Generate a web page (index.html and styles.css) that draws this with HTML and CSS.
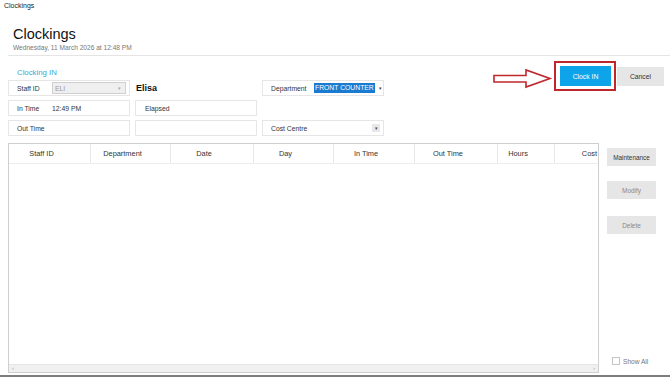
FILE: index.html
```html
<!DOCTYPE html>
<html lang="en">
<head>
    <meta charset="UTF-8">
    <meta name="viewport" content="width=device-width, initial-scale=1.0">
    <title>Clockings</title>
    <link rel="stylesheet" href="styles.css">
</head>
<body>
    <div class="window">
        <div class="titlebar">Clockings</div>

        <div class="header">
            <h1>Clockings</h1>
            <div class="date">Wednesday, 11 March 2026 at 12:48 PM</div>
        </div>

        <div class="top">
            <div class="form">
                <div class="section-title">Clocking IN</div>
                <div class="fields">
                    <div class="field">
                        <span class="label">Staff ID</span>
                        <div class="select disabled"><span>ELI</span><span class="caret">&#9662;</span></div>
                    </div>
                    <div class="staff-name">Elisa</div>
                    <div class="field">
                        <span class="label wide">Department</span>
                        <span class="highlight">FRONT COUNTER</span>
                        <span class="drop">&#9662;</span>
                    </div>

                    <div class="field">
                        <span class="label">In Time</span>
                        <span class="value">12:49 PM</span>
                    </div>
                    <div class="field pad">
                        <span class="label">Elapsed</span>
                    </div>
                    <div></div>

                    <div class="field">
                        <span class="label">Out Time</span>
                    </div>
                    <div class="field"></div>
                    <div class="field">
                        <span class="label">Cost Centre</span>
                        <span class="drop grey">&#9662;</span>
                    </div>
                </div>
            </div>

            <div class="actions">
                <svg class="pointer" width="62" height="22" viewBox="0 0 62 22">
                    <path d="M2 7.5 H34 V2 L58 10.5 L34 19 V14 H2 Z" fill="#fff" stroke="#c0272d" stroke-width="1.6" stroke-linejoin="miter"/>
                </svg>
                <div class="highlight-box">
                    <button class="btn primary">Clock IN</button>
                </div>
                <button class="btn cancel">Cancel</button>
            </div>
        </div>

        <div class="main">
            <div class="grid">
                <div class="grid-head">
                    <div class="col c1">Staff ID</div>
                    <div class="col c2">Department</div>
                    <div class="col c3">Date</div>
                    <div class="col c4">Day</div>
                    <div class="col c5">In Time</div>
                    <div class="col c6">Out Time</div>
                    <div class="col c7">Hours</div>
                    <div class="col c8">Cost</div>
                </div>
                <div class="grid-body"></div>
                <div class="hscroll">
                    <span>&#8249;</span>
                    <span>&#8250;</span>
                </div>
            </div>

            <div class="side">
                <button class="btn side-btn">Maintenance</button>
                <button class="btn side-btn off">Modify</button>
                <button class="btn side-btn off">Delete</button>
                <label class="show-all"><span class="check"></span>Show All</label>
            </div>
        </div>
    </div>
</body>
</html>
```

FILE: styles.css
```css
body {
    margin: 0;
    font-family: "Liberation Sans", Arial, sans-serif;
    background-color: #ffffff;
    color: #222;
}

.window {
    width: 670px;
    height: 377px;
    box-sizing: border-box;
    border-bottom: 2px solid #7d7d7d;
    overflow: hidden;
}

.titlebar {
    height: 14px;
    padding-left: 4px;
    font-size: 7px;
    line-height: 12px;
    color: #222;
}

.header {
    margin: 12px 0 0 8px;
    padding: 0 0 3px 5px;
    border-bottom: 1px solid #e4e4e4;
}

h1 {
    margin: 0;
    font-size: 14.5px;
    line-height: 17px;
    font-weight: normal;
    color: #111;
}

.date {
    font-size: 6.6px;
    line-height: 9px;
    color: #777;
}

/* top section: form and clock buttons */

.top {
    display: flex;
    justify-content: space-between;
}

.form {
    padding: 12px 0 0 8px;
}

.section-title {
    padding-left: 9px;
    font-size: 7.8px;
    line-height: 10px;
    color: #3aa6d4;
    margin-bottom: 2px;
}

.fields {
    display: grid;
    grid-template-columns: 122px 122px 122px;
    grid-auto-rows: 16px;
    gap: 4px 5px;
}

.field {
    display: flex;
    align-items: center;
    border: 1px solid #e6e6e6;
    box-sizing: border-box;
    padding-left: 8px;
    font-size: 6.8px;
    color: #333;
    white-space: nowrap;
}

.field.pad {
    padding-left: 9px;
}

.label {
    width: 35px;
    flex-shrink: 0;
}

.label.wide {
    width: 43px;
}

.value {
    color: #333;
}

.select {
    display: flex;
    justify-content: space-between;
    align-items: center;
    width: 74px;
    height: 12px;
    box-sizing: border-box;
    padding: 0 4px 0 2px;
    border: 1px solid #cfcfcf;
    background-color: #efefef;
    color: #999;
}

.caret {
    font-size: 5px;
    color: #aaa;
}

.staff-name {
    display: flex;
    align-items: center;
    padding-left: 1px;
    font-size: 9px;
    font-weight: bold;
    color: #111;
}

.highlight {
    background-color: #1a7bd0;
    color: #fff;
    padding: 1px 1px;
    line-height: 8px;
}

.drop {
    margin-left: 4px;
    width: 8px;
    height: 8px;
    font-size: 5px;
    line-height: 8px;
    text-align: center;
    color: #444;
}

.drop.grey {
    margin-left: auto;
    margin-right: 3px;
    background-color: #e8e8e8;
}

.actions {
    display: flex;
    align-items: flex-start;
    padding: 5px 6px 0 0;
}

.pointer {
    margin: 7px 0 0 0;
}

.highlight-box {
    border: 2px solid #c0272d;
    padding: 3px 3px 3px 4px;
}

.btn {
    font-family: "Liberation Sans", Arial, sans-serif;
    border: none;
    padding: 0;
    cursor: pointer;
}

.primary {
    display: block;
    width: 51px;
    height: 20px;
    background-color: #0ea4ea;
    color: #fff;
    font-size: 6.8px;
}

.cancel {
    margin: 6px 0 0 1px;
    width: 47px;
    height: 19px;
    background-color: #e6e6e6;
    color: #333;
    font-size: 6.8px;
}

/* lower section: grid and side buttons */

.main {
    display: flex;
    margin-top: 7px;
    padding-left: 8px;
}

.grid {
    display: flex;
    flex-direction: column;
    width: 591px;
    height: 230px;
    box-sizing: border-box;
    border: 1px solid #cfcfcf;
}

.grid-head {
    display: flex;
    height: 20px;
    border-bottom: 1px solid #ececec;
    box-sizing: border-box;
}

.col {
    display: flex;
    align-items: center;
    justify-content: center;
    box-sizing: border-box;
    padding-right: 16px;
    border-right: 1px solid #e8e8e8;
    font-size: 7.4px;
    color: #333;
}

.c1 { width: 82px; }
.c2 { width: 80px; }
.c3 { width: 83px; }
.c4 { width: 80px; }
.c5 { width: 81px; }
.c6 { width: 83px; }
.c7 { width: 57px; }
.c8 {
    flex: 1;
    justify-content: flex-end;
    padding-right: 1px;
    border-right: none;
}

.grid-body {
    flex: 1;
}

.hscroll {
    display: flex;
    justify-content: space-between;
    align-items: center;
    height: 7px;
    padding: 0 3px;
    background-color: #f0f0f0;
    border-top: 1px solid #e6e6e6;
    font-size: 6px;
    line-height: 7px;
    color: #aaa;
}

.side {
    display: flex;
    flex-direction: column;
    align-items: flex-start;
    padding: 5px 0 0 8px;
    height: 225px;
}

.side-btn {
    width: 49px;
    height: 18px;
    margin-bottom: 15px;
    background-color: #e6e6e6;
    color: #333;
    font-size: 6.4px;
}

.side-btn.off {
    margin-bottom: 17px;
    color: #888;
}

.show-all {
    display: flex;
    align-items: center;
    margin: auto 0 8px 5px;
    font-size: 6.6px;
    color: #777;
}

.check {
    width: 6px;
    height: 6px;
    border: 1px solid #c4c4c4;
    margin-right: 3px;
}
```
